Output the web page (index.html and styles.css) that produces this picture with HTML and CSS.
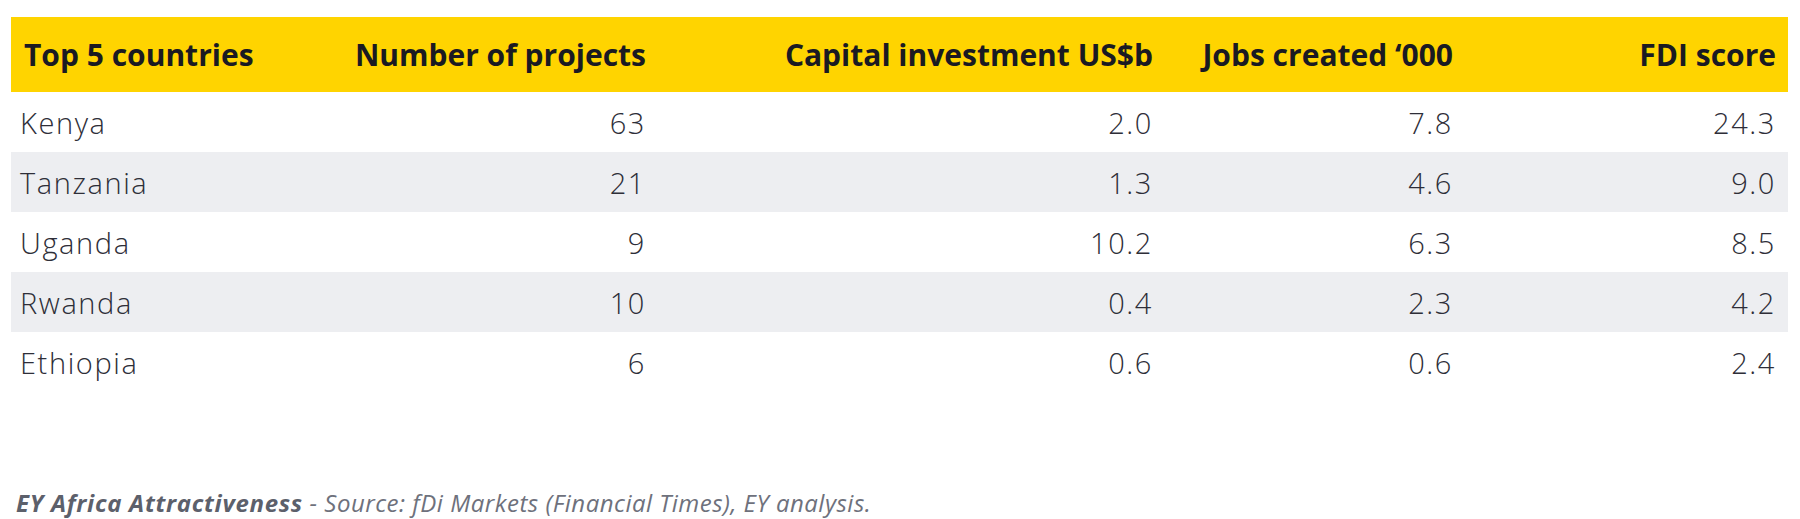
FILE: index.html
```html
<!DOCTYPE html>
<html lang="en">
<head>
<meta charset="utf-8">
<title>Top 5 countries</title>
<link rel="stylesheet" href="styles.css">
</head>
<body>
<div class="wrap">
  <div class="table">
    <div class="row head">
      <div class="cell first">Top 5 countries</div>
      <div class="cell">Number of projects</div>
      <div class="cell">Capital investment US$b</div>
      <div class="cell">Jobs created ‘000</div>
      <div class="cell">FDI score</div>
    </div>
    <div class="row">
      <div class="cell first">Kenya</div>
      <div class="cell">63</div>
      <div class="cell">2.0</div>
      <div class="cell">7.8</div>
      <div class="cell">24.3</div>
    </div>
    <div class="row alt">
      <div class="cell first">Tanzania</div>
      <div class="cell">21</div>
      <div class="cell">1.3</div>
      <div class="cell">4.6</div>
      <div class="cell">9.0</div>
    </div>
    <div class="row">
      <div class="cell first">Uganda</div>
      <div class="cell">9</div>
      <div class="cell">10.2</div>
      <div class="cell">6.3</div>
      <div class="cell">8.5</div>
    </div>
    <div class="row alt">
      <div class="cell first">Rwanda</div>
      <div class="cell">10</div>
      <div class="cell">0.4</div>
      <div class="cell">2.3</div>
      <div class="cell">4.2</div>
    </div>
    <div class="row">
      <div class="cell first">Ethiopia</div>
      <div class="cell">6</div>
      <div class="cell">0.6</div>
      <div class="cell">0.6</div>
      <div class="cell">2.4</div>
    </div>
  </div>
  <p class="source"><strong>EY Africa Attractiveness</strong> - Source: fDi Markets (Financial Times), EY analysis.</p>
</div>
</body>
</html>
```
FILE: styles.css
```css
html, body {
  margin: 0;
  padding: 0;
  background: #ffffff;
}

.wrap {
  padding: 17px 12px 0 11px;
  font-family: "Open Sans", "Liberation Sans", sans-serif;
}

.table {
  display: flex;
  flex-direction: column;
  width: 1777px;
}

.row {
  display: grid;
  grid-template-columns: 329px 317px 507px 300px 324px;
  align-items: center;
  height: 60px;
  font-size: 29px;
  font-weight: 300;
  letter-spacing: 1.6px;
  color: #2e2e38;
}

.row.alt {
  background: #edeef1;
}

.row.head {
  height: 75px;
  background: #ffd400;
  font-size: 30px;
  font-weight: 700;
  letter-spacing: 0;
  color: #1a1a22;
}

.cell {
  text-align: right;
  padding-right: 11px;
  padding-top: 1px;
  white-space: nowrap;
}

.row .cell:last-child {
  padding-right: 12px;
}

.head .cell {
  padding-top: 0;
}

.cell.first {
  text-align: left;
  padding-left: 9px;
  padding-right: 0;
}

.head .cell.first {
  padding-left: 13px;
}

.source {
  margin: 96px 0 0 5px;
  font-size: 24px;
  line-height: 30px;
  font-style: italic;
  font-weight: 400;
  letter-spacing: 0.5px;
  color: #6e717c;
}

.source strong {
  font-weight: 700;
  letter-spacing: 0.7px;
  color: #5c606b;
}
```
